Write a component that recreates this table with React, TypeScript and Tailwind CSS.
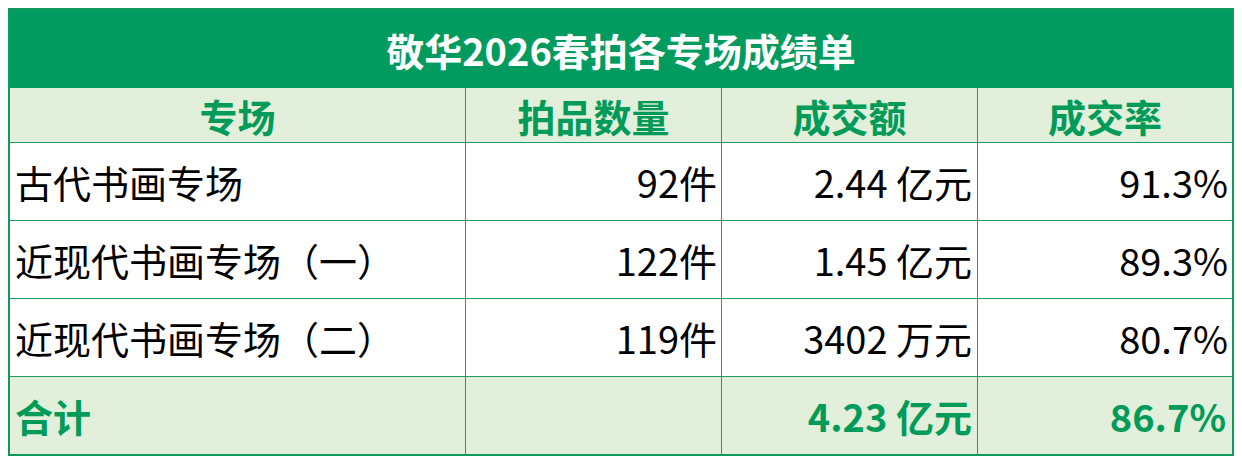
const rows = [
  { name: "古代书画专场", count: "92件", amount: "2.44 亿元", rate: "91.3%" },
  { name: "近现代书画专场（一）", count: "122件", amount: "1.45 亿元", rate: "89.3%" },
  { name: "近现代书画专场（二）", count: "119件", amount: "3402 万元", rate: "80.7%" },
];

const cell = "flex items-center border-r border-[#1f9a60]";

export default function App() {
  return (
    <div className="bg-white w-[1242px] h-[464px] p-2 font-['Noto_Sans_CJK_SC',sans-serif]">
      <div className="w-[1226px] border-2 border-[#13985c]">
        <div className="h-[78px] bg-[#019b5f] flex items-center justify-center text-white text-[38px] font-bold pt-[1px]">
          敬华2026春拍各专场成绩单
        </div>
        <div className="grid grid-cols-[456px_256px_256px_1fr]">
          {["专场", "拍品数量", "成交额", "成交率"].map((h, i) => (
            <div
              key={h}
              className={`h-[55px] bg-[#e2efda] border-b border-[#1f9a60] flex items-center justify-center text-[#009b58] text-[38px] font-bold ${
                i < 3 ? "border-r" : ""
              }`}
            >
              {h}
            </div>
          ))}
          {rows.map((r) => (
            <div key={r.name} className="contents text-[38px] text-black">
              <div className={`${cell} h-[78px] border-b pl-[5px]`}>{r.name}</div>
              <div className={`${cell} h-[78px] border-b justify-end pr-[4px]`}>{r.count}</div>
              <div className={`${cell} h-[78px] border-b justify-end pr-[5px]`}>{r.amount}</div>
              <div className="h-[78px] border-b border-[#1f9a60] flex items-center justify-end pr-[4px]">{r.rate}</div>
            </div>
          ))}
          <div className={`${cell} h-[77px] bg-[#e2efda] pl-[5px] text-[38px] font-bold text-[#009b58]`}>合计</div>
          <div className={`${cell} h-[77px] bg-[#e2efda]`}></div>
          <div className={`${cell} h-[77px] bg-[#e2efda] justify-end pr-[5px] text-[38px] font-bold text-[#009b58]`}>4.23 亿元</div>
          <div className="h-[77px] bg-[#e2efda] flex items-center justify-end pr-[6px] text-[38px] font-bold text-[#009b58]">86.7%</div>
        </div>
      </div>
    </div>
  );
}
